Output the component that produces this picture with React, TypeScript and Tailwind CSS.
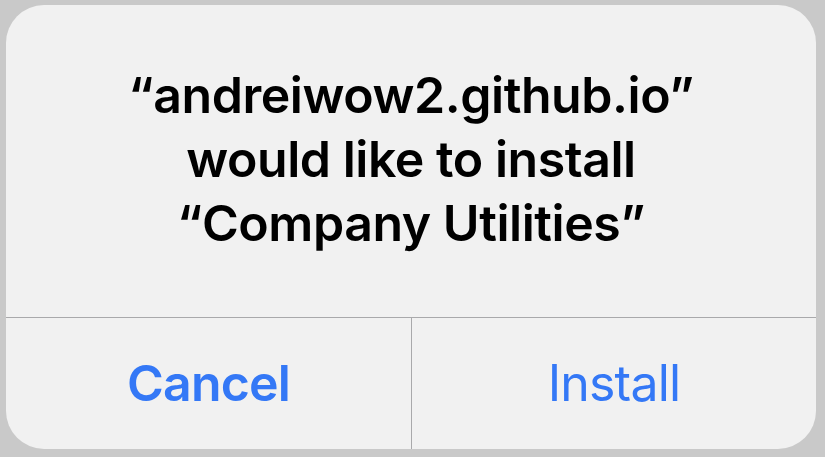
import { FC, JSX } from 'react';

const App: FC = (): JSX.Element => {
  return (
    <div className="w-[825px] h-[457px] bg-[#c9c9c9] pt-[5px] pl-[6px] overflow-hidden">
      <div
        className="w-[810px] h-[444px] rounded-[38px] bg-[#f1f1f1] flex flex-col overflow-hidden"
        style={{ fontFamily: 'Inter, "Noto Sans", sans-serif' }}
      >
        <div className="h-[313px] border-b border-[#a9a9ab] pt-[58px] flex flex-col items-center text-center text-black font-semibold text-[50px] leading-[64px] tracking-[-0.45px]">
          <p>“andreiwow2.github.io”</p>
          <p>would like to install</p>
          <p>“Company Utilities”</p>
        </div>
        <div className="flex flex-1 tracking-[-0.8px]">
          <button className="w-[406px] border-r border-[#a9a9ab] flex items-center justify-center text-[50px] font-semibold text-[#3478f6]">
            Cancel
          </button>
          <button className="flex-1 flex items-center justify-center text-[50px] font-normal text-[#3478f6]">
            Install
          </button>
        </div>
      </div>
    </div>
  );
};

export default App;
